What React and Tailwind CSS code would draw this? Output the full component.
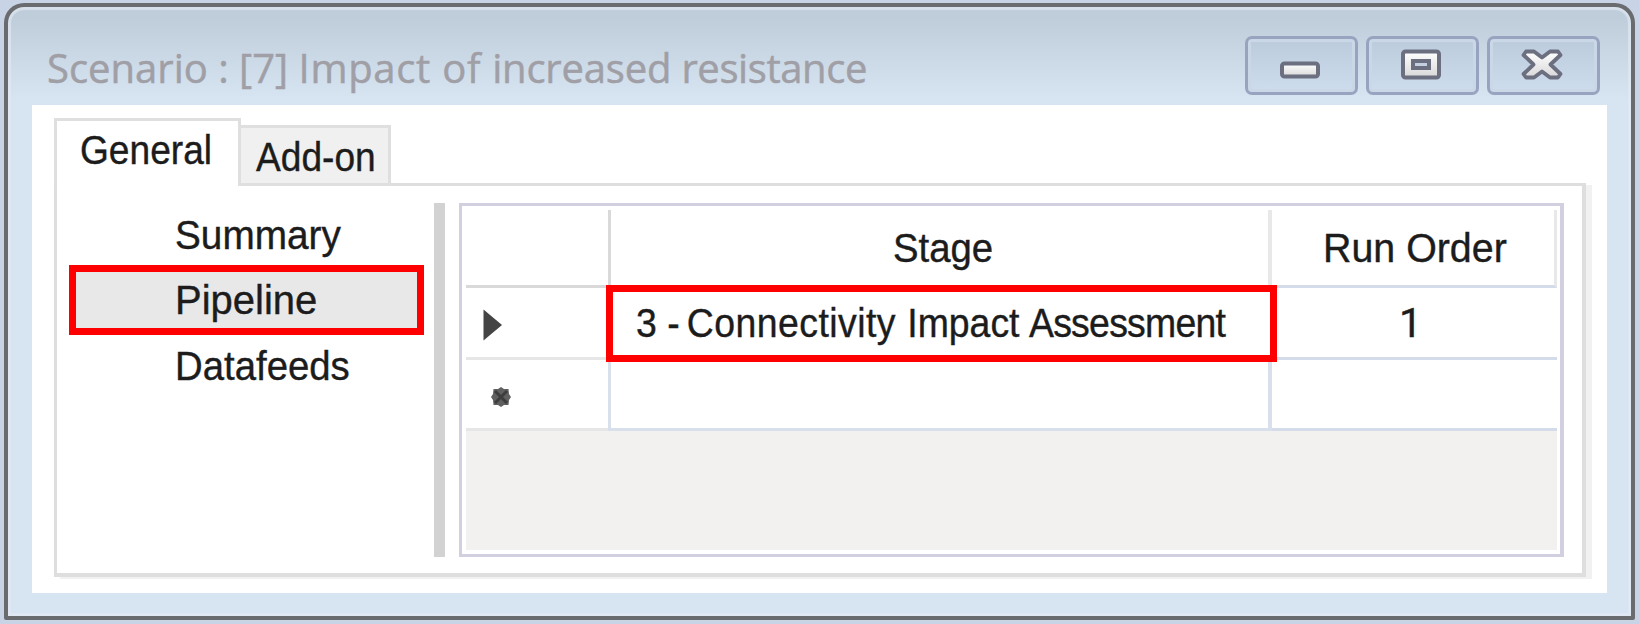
const sans =
  "font-['Liberation_Sans',Arial,sans-serif] text-[41px] text-[#1c1c1c] [-webkit-text-stroke:0.4px_#1c1c1c]";

function Label({ children, className = '' }) {
  return <span className={`inline-block origin-left whitespace-pre ${className}`}>{children}</span>;
}

function GlyphGradient({ id }) {
  return (
    <defs>
      <linearGradient id={id} x1="0" y1="0" x2="0" y2="1">
        <stop offset="0" stopColor="#ffffff" />
        <stop offset="1" stopColor="#d8d8d8" />
      </linearGradient>
    </defs>
  );
}

function CaptionButton({ label, children }) {
  return (
    <button
      aria-label={label}
      className="flex h-[59px] w-[113px] items-center justify-center rounded-[7px] border-[3px] border-[#98a4bf] bg-linear-to-b from-[#bccbdc] to-[#cedded] pr-[4px] pb-[1px] shadow-[inset_0_0_0_3px_#c9d7e6]"
    >
      <svg width="42" height="34" viewBox="0 0 42 34" fill="none">
        {children}
      </svg>
    </button>
  );
}

function TitleBar() {
  return (
    <header className="flex h-[98px] justify-between pr-[31px] pl-[39px]">
      <h1 className="pt-[38px] font-['Open_Sans','Noto_Sans',sans-serif] text-[40px] leading-[46px] text-[#a09fa6] [-webkit-text-stroke:0.5px_#a09fa6]">
        <Label>
          Scenario : [7] <span className="tracking-[0.7px]">Impact of </span>
          <span className="tracking-[-0.2px]">increased </span>
          <span className="tracking-[-0.4px]">resistance</span>
        </Label>
      </h1>
      <div className="flex gap-[8px] pt-[29px]">
        <CaptionButton label="Minimize">
          <GlyphGradient id="min" />
          <rect x="3" y="15.5" width="36" height="13" rx="2.5" fill="url(#min)" stroke="#6b6f80" strokeWidth="4" />
        </CaptionButton>
        <CaptionButton label="Maximize">
          <GlyphGradient id="max" />
          <rect x="3" y="3.5" width="36" height="26" rx="2.5" fill="url(#max)" stroke="#6b6f80" strokeWidth="4" />
          <rect x="13" y="13" width="16" height="7" fill="#c3d0e0" stroke="#6b6f80" strokeWidth="4" />
        </CaptionButton>
        <CaptionButton label="Close">
          <GlyphGradient id="close" />
          <path
            d="M5 3.500H13L21 9.500L29 3.500H37L39.500 7L29.500 16.500L39.500 26L37 29.500H29L21 23.500L13 29.500H5L2.500 26L12.500 16.500L2.500 7Z"
            fill="url(#close)"
            stroke="#6b6f80"
            strokeWidth="3.800"
            strokeLinejoin="round"
          />
        </CaptionButton>
      </div>
    </header>
  );
}

function Tabs() {
  return (
    <div className="flex items-end">
      <div className="z-10 h-[68px] w-[187px] border-[3px] border-b-0 border-[#dfdfdf] bg-white pt-[6px] pl-[23px] leading-[46px]">
        <Label className="scale-x-[0.905]">General</Label>
      </div>
      <div className="z-10 -ml-[3px] h-[61px] w-[153px] border-[3px] border-[#dfdfdf] bg-[#f0f0f0] pt-[6px] pl-[15px] leading-[46px]">
        <Label className="scale-x-[0.905]">Add-on</Label>
      </div>
    </div>
  );
}

function Sidebar() {
  return (
    <nav className="flex w-[367px] flex-col pt-[17px] pl-[12px] leading-[56px]">
      <div className="h-[62px] pt-[4px] pl-[106px]">
        <Label className="scale-x-[0.945]">Summary</Label>
      </div>
      <div className="h-[70px] w-[355px] border-[7px] border-[#ff0000] bg-[#e8e8e8] pl-[99px]">
        <Label className="scale-x-[0.975]">Pipeline</Label>
      </div>
      <div className="h-[62px] pt-[3px] pl-[106px]">
        <Label className="scale-x-[0.935]">Datafeeds</Label>
      </div>
    </nav>
  );
}

function Grid() {
  return (
    <div className="h-[354px] w-[1105px] border-[3px] border-r-4 border-[#d2d0e0] px-[4px] pt-[4px] pb-[4px]">
      <div className="flex h-full w-[1091px] flex-col bg-[#f2f1ef]">
        <div className="grid h-[78px] grid-cols-[145px_661px_285px] bg-white leading-[77px]">
          <div className="h-[78px] border-r-[3px] border-b-[3px] border-[#d9d9d9]" />
          <div className="h-[78px] border-r-[4px] border-b-[3px] border-r-[#e8e8e8] border-b-[#d5dce9] pl-[282px]">
            <Label className="scale-x-[0.935]">Stage</Label>
          </div>
          <div className="h-[78px] border-r-[3px] border-b-[3px] border-r-[#e8e8e8] border-b-[#d5dce9] pl-[51px]">
            <Label className="scale-x-[0.96]">Run Order</Label>
          </div>
        </div>
        <div className="grid h-[72px] grid-cols-[145px_661px_285px] grid-rows-[72px] bg-white leading-[68px]">
          <div className="flex items-center border-b-[3px] border-[#e6e6e6] pt-[5px] pl-[17px]">
            <svg width="20" height="32" viewBox="0 0 20 32">
              <path d="M0.500 0.500L19 16L0.500 31.500Z" fill="#444444" />
            </svg>
          </div>
          <div className="z-10 -mt-[3px] -ml-[5px] h-[77px] w-[671px] border-[7px] border-[#ff0000] bg-white pl-[23px] leading-[63px]">
            <Label className="scale-x-[0.912]">
              3 -<span className="-ml-[4px] tracking-[0.5px]"> Connectivity</span>
              <span className="ml-[1px]"> Impact</span>
              <span className="ml-[2px] tracking-[-0.8px]"> Assessment</span>
            </Label>
          </div>
          <div className="border-b-[3px] border-[#d5dce9] pl-[127px] font-['Roboto',sans-serif] leading-[70px]">
            <Label>1</Label>
          </div>
        </div>
        <div className="grid h-[71px] grid-cols-[142px_664px_285px] bg-white">
          <div className="flex items-center border-b-[3px] border-[#e6e6e6] pt-[6px] pl-[24px]">
            <svg width="22" height="22" viewBox="0 0 22 22">
              <path
                d="M11 1L14 3H18.500L19 8L21 11L19 14L18.500 19H14L11 21L8 19H3.500L3 14L1 11L3 8L3.500 3H8Z"
                fill="#606060"
              />
              <path d="M5 5L17 17M17 5L5 17" stroke="#3d3d3d" strokeWidth="3" />
            </svg>
          </div>
          <div className="border-x-[3px] border-r-[4px] border-b-[3px] border-[#d8e0ec]" />
          <div className="border-b-[3px] border-[#d5dce9]" />
        </div>
      </div>
    </div>
  );
}

export default function App() {
  return (
    <div className="h-[624px] w-[1639px] overflow-hidden bg-[#c8d3e6] pt-[3px] pl-[4px]">
      <div className="h-[617px] w-[1631px] overflow-hidden rounded-t-[20px] rounded-b-[2px] border-[4px] border-[#6a6b6e] bg-[linear-gradient(to_bottom,#bfcddb_10px,#d7e4f2_92px)] shadow-[inset_0_0_1px_3px_#e2eaf3aa]">
        <TitleBar />
        <main className={`ml-[24px] h-[488px] w-[1575px] bg-white pt-[13px] pl-[22px] ${sans}`}>
          <Tabs />
          <section className="-mt-[3px] flex h-[394px] w-[1532px] border-[3px] border-r-[4px] border-b-[4px] border-[#dedede] bg-white shadow-[6px_2px_0_#f1f1f1]">
            <Sidebar />
            <div className="mt-[17px] mr-[14px] ml-[10px] h-[354px] w-[11px] shrink-0 bg-[#d2d2d2]" />
            <div className="pt-[17px]">
              <Grid />
            </div>
          </section>
        </main>
      </div>
    </div>
  );
}
